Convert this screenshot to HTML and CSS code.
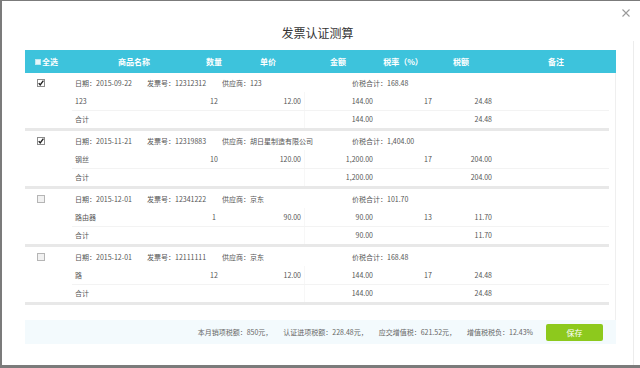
FILE: index.html
```html
<!DOCTYPE html>
<html lang="zh-CN">
<head>
    <meta charset="UTF-8">
    <meta name="viewport" content="width=device-width, initial-scale=1.0">
    <title>发票认证测算</title>
    <link rel="stylesheet" href="styles.css">
</head>
<body>

<div class="modal">
    <div class="dialog">
        <div class="dialog-head">
            <span class="close">
                <svg width="8" height="8" viewBox="0 0 8 8"><path d="M0.5 0.5 L7.5 7.5 M7.5 0.5 L0.5 7.5" stroke="#9a9a9a" stroke-width="1.1"/></svg>
            </span>
            <h1>发票认证测算</h1>
        </div>

        <div class="panel">
            <div class="thead">
                <div class="th th-check"><i class="mini-box"></i>全选</div>
                <div class="th th-name">商品名称</div>
                <div class="th th-qty">数量</div>
                <div class="th th-price">单价</div>
                <div class="th th-amount">金额</div>
                <div class="th th-rate">税率（%）</div>
                <div class="th th-tax">税额</div>
                <div class="th th-note">备注</div>
            </div>

            <div class="list">
                <div class="group">
                    <div class="check">
                        <svg width="8" height="8" viewBox="0 0 8 8"><rect x="0.5" y="0.5" width="7" height="7" fill="#fff" stroke="#8c8c8c"/><path d="M1.7 4.1 L3.2 5.8 L6.4 1.6" fill="none" stroke="#222" stroke-width="1.4"/></svg>
                    </div>
                    <div class="rows">
                        <div class="info"><span class="i-date">日期：2015-09-22</span><span>发票号：12312312</span><span>供应商：123</span><span>价税合计：168.48</span></div>
                        <div class="item"><span class="c-name">123</span><span class="c-qty">12</span><span class="c-price">12.00</span><span class="c-amount">144.00</span><span class="c-rate">17</span><span class="c-tax">24.48</span><span></span></div>
                        <div class="item total"><span class="c-name">合计</span><span class="c-qty"></span><span class="c-price"></span><span class="c-amount">144.00</span><span class="c-rate"></span><span class="c-tax">24.48</span><span></span></div>
                    </div>
                </div>

                <div class="group">
                    <div class="check">
                        <svg width="8" height="8" viewBox="0 0 8 8"><rect x="0.5" y="0.5" width="7" height="7" fill="#fff" stroke="#8c8c8c"/><path d="M1.7 4.1 L3.2 5.8 L6.4 1.6" fill="none" stroke="#222" stroke-width="1.4"/></svg>
                    </div>
                    <div class="rows">
                        <div class="info"><span class="i-date">日期：2015-11-21</span><span>发票号：12319883</span><span>供应商：胡日星制造有限公司</span><span>价税合计：1,404.00</span></div>
                        <div class="item"><span class="c-name">钢丝</span><span class="c-qty">10</span><span class="c-price">120.00</span><span class="c-amount">1,200.00</span><span class="c-rate">17</span><span class="c-tax">204.00</span><span></span></div>
                        <div class="item total"><span class="c-name">合计</span><span class="c-qty"></span><span class="c-price"></span><span class="c-amount">1,200.00</span><span class="c-rate"></span><span class="c-tax">204.00</span><span></span></div>
                    </div>
                </div>

                <div class="group">
                    <div class="check">
                        <svg width="8" height="8" viewBox="0 0 8 8"><rect x="0.5" y="0.5" width="7" height="7" fill="#f1f1f1" stroke="#b5b5b5"/></svg>
                    </div>
                    <div class="rows">
                        <div class="info"><span class="i-date">日期：2015-12-01</span><span>发票号：12341222</span><span>供应商：京东</span><span>价税合计：101.70</span></div>
                        <div class="item"><span class="c-name">路由器</span><span class="c-qty">1</span><span class="c-price">90.00</span><span class="c-amount">90.00</span><span class="c-rate">13</span><span class="c-tax">11.70</span><span></span></div>
                        <div class="item total"><span class="c-name">合计</span><span class="c-qty"></span><span class="c-price"></span><span class="c-amount">90.00</span><span class="c-rate"></span><span class="c-tax">11.70</span><span></span></div>
                    </div>
                </div>

                <div class="group">
                    <div class="check">
                        <svg width="8" height="8" viewBox="0 0 8 8"><rect x="0.5" y="0.5" width="7" height="7" fill="#f1f1f1" stroke="#b5b5b5"/></svg>
                    </div>
                    <div class="rows">
                        <div class="info"><span class="i-date">日期：2015-12-01</span><span>发票号：12111111</span><span>供应商：京东</span><span>价税合计：168.48</span></div>
                        <div class="item"><span class="c-name">路</span><span class="c-qty">12</span><span class="c-price">12.00</span><span class="c-amount">144.00</span><span class="c-rate">17</span><span class="c-tax">24.48</span><span></span></div>
                        <div class="item total"><span class="c-name">合计</span><span class="c-qty"></span><span class="c-price"></span><span class="c-amount">144.00</span><span class="c-rate"></span><span class="c-tax">24.48</span><span></span></div>
                    </div>
                </div>
            </div>

            <div class="foot">
                <span>本月销项税额：850元，</span>
                <span>认证进项税额：228.48元，</span>
                <span>应交增值税：621.52元，</span>
                <span>增值税税负：12.43%</span>
                <button class="button-save">保存</button>
            </div>
        </div>
    </div>
    <div class="rail"></div>
</div>

</body>
</html>
```

FILE: styles.css
```css
body {
    margin: 0;
    padding: 1px 0 0 2px;
    background-color: #7b7b7b;
    font-family: "Noto Sans CJK SC", "Noto Sans", sans-serif;
    overflow: hidden;
}
.modal {
    display: flex;
    height: 364px;
    background-color: #fff;
}
.dialog {
    width: 631px;
}
.rail {
    flex: 1;
    margin-top: 40px;
    border-left: 1px solid #ececec;
}
.dialog-head {
    height: 49px;
    display: flex;
    flex-direction: column;
}
.close {
    align-self: flex-end;
    margin: 8px 3px 0 0;
    height: 8px;
    line-height: 0;
}
.dialog-head h1 {
    margin: 8px 0 0;
    font-size: 12px;
    line-height: 16px;
    font-weight: normal;
    color: #333;
    text-align: center;
}
.panel {
    margin-left: 23px;
    width: 591px;
}
.thead {
    display: grid;
    grid-template-columns: 45px 128px 32px 76px 64px 66px 50px 1fr;
    height: 23px;
    align-items: center;
    background-color: #3dc3dc;
    color: #fff;
    font-size: 8px;
    font-weight: bold;
}
.th {
    text-align: center;
    white-space: nowrap;
}
.th-check {
    text-align: left;
    padding-left: 10px;
    display: flex;
    align-items: center;
}
.th-note {
    padding-left: 10px;
}
.mini-box {
    display: inline-block;
    width: 4px;
    height: 4px;
    margin-right: 1px;
    background-color: #e8f7fa;
    border: 1px solid #bfe9f1;
}
.list {
    height: 247px;
    border-right: 1px solid #efefef;
}
.group {
    display: grid;
    grid-template-columns: 45px 1fr;
    width: 584px;
    padding-top: 1px;
    border-bottom: 3px solid #e8e8e8;
}
.check {
    padding: 5px 0 0 12px;
    line-height: 0;
}
.rows {
    font-size: 7px;
    color: #555;
}
.info {
    display: grid;
    grid-template-columns: 77px 75px 130px 1fr;
    height: 18px;
    line-height: 18px;
    white-space: nowrap;
}
.i-date {
    padding-left: 5px;
}
.item {
    display: grid;
    grid-template-columns: 125px 38px 72px 95px 56px 39px 1fr;
    height: 18px;
    line-height: 18px;
    white-space: nowrap;
}
.item.total {
    box-sizing: border-box;
    border-top: 1px solid #f3f3f3;
    line-height: 17px;
    margin-left: 2px;
    grid-template-columns: 123px 38px 72px 95px 56px 39px 1fr;
}
.c-name {
    padding-left: 5px;
}
.total .c-name {
    padding-left: 3px;
}
.c-qty,
.c-rate {
    text-align: center;
}
.c-price {
    text-align: right;
    padding-right: 3px;
    border-right: 1px solid #f7f7f7;
}
.c-amount {
    text-align: right;
    padding-right: 27px;
}
.c-tax {
    text-align: right;
    padding-right: 3px;
}
.foot {
    display: flex;
    justify-content: flex-end;
    align-items: center;
    gap: 11px;
    height: 24px;
    padding-right: 13px;
    background-color: #f3fafd;
    font-size: 7px;
    color: #666;
    white-space: nowrap;
}
.button-save {
    width: 57px;
    height: 17px;
    margin-left: 2px;
    padding: 0;
    border: none;
    border-radius: 2px;
    background-color: #8dc91d;
    color: #fff;
    font-family: inherit;
    font-size: 8px;
}
```
